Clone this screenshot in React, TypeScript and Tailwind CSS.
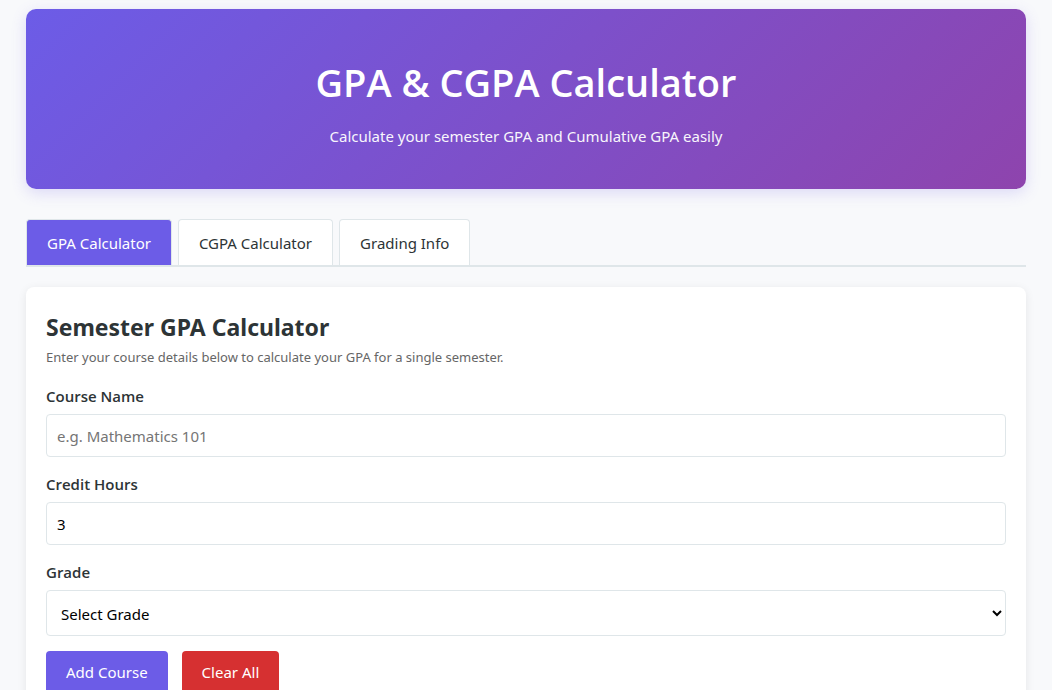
import { useState } from "react";

const tabs = ["GPA Calculator", "CGPA Calculator", "Grading Info"];
const grades = ["A", "A-", "B+", "B", "B-", "C+", "C", "D", "F"];

const labelClass = "mb-[6px] block font-['Open_Sans',sans-serif] text-[15px] leading-6 font-semibold text-[#2d3436]";
const fieldClass =
  "block w-full rounded border border-[#dfe6e9] bg-white px-[10px] text-[15px] text-black placeholder:text-[#757575]";

export default function App() {
  const [active, setActive] = useState(tabs[0]);
  const [name, setName] = useState("");
  const [hours, setHours] = useState("3");
  const [grade, setGrade] = useState("");

  const clear = () => {
    setName("");
    setHours("3");
    setGrade("");
  };

  return (
    <div className="min-h-screen bg-[#f8f9fb] px-5 pt-[9px] font-['Noto_Sans','Open_Sans',sans-serif] text-[15px] text-[#2d3436]">
      <div className="mx-auto max-w-[1000px]">
        <header className="rounded-[10px] bg-[linear-gradient(135deg,#6c5ce7,#8e44ad)] px-5 pt-[43px] pb-[41px] text-center text-white shadow-[0_4px_15px_rgba(108,92,231,0.2)]">
          <h1 className="font-['Open_Sans',sans-serif] text-[38px] leading-[60px] font-semibold">GPA &amp; CGPA Calculator</h1>
          <p className="mt-3 leading-6 opacity-95">Calculate your semester GPA and Cumulative GPA easily</p>
        </header>

        <div role="tablist" className="mt-[30px] flex gap-[6px] border-b-2 border-[#dfe6e9]">
          {tabs.map((tab) => (
            <button
              key={tab}
              type="button"
              role="tab"
              aria-selected={tab === active}
              onClick={() => setActive(tab)}
              className={`h-[46px] rounded-t border border-b-0 border-[#dfe6e9] px-5 pt-[2px] ${
                tab === active ? "bg-[#6c5ce7] text-white" : "bg-white text-[#2d3436]"
              }`}
            >
              {tab}
            </button>
          ))}
        </div>

        <main className="mt-5 rounded-lg bg-white px-5 pt-6 pb-5 shadow-[0_2px_10px_rgba(0,0,0,0.08)]">
          <h2 className="text-[23px] leading-8 font-bold">Semester GPA Calculator</h2>
          <p className="mt-1 text-[13px] leading-5 text-[#666]">
            Enter your course details below to calculate your GPA for a single semester.
          </p>
          <form className="mt-[17px]" onSubmit={(e) => e.preventDefault()}>
            <div className="mb-[15px]">
              <label htmlFor="course" className={labelClass}>Course Name</label>
              <input
                id="course"
                type="text"
                placeholder="e.g. Mathematics 101"
                value={name}
                onChange={(e) => setName(e.target.value)}
                className={`${fieldClass} h-[43px]`}
              />
            </div>
            <div className="mb-[15px]">
              <label htmlFor="hours" className={labelClass}>Credit Hours</label>
              <input
                id="hours"
                type="number"
                min="1"
                value={hours}
                onChange={(e) => setHours(e.target.value)}
                className={`${fieldClass} h-[43px]`}
              />
            </div>
            <div className="mb-[15px]">
              <label htmlFor="grade" className={labelClass}>Grade</label>
              <select
                id="grade"
                value={grade}
                onChange={(e) => setGrade(e.target.value)}
                className={`${fieldClass} h-[46px] pt-[2px]`}
              >
                <option value="">Select Grade</option>
                {grades.map((g) => (
                  <option key={g}>{g}</option>
                ))}
              </select>
            </div>
            <div className="flex gap-[14px]">
              <button type="submit" className="h-[43px] rounded bg-[#6c5ce7] px-5 text-white">
                Add Course
              </button>
              <button type="button" onClick={clear} className="h-[43px] rounded bg-[#d63031] px-5 text-white">
                Clear All
              </button>
            </div>
          </form>
        </main>
      </div>
    </div>
  );
}
